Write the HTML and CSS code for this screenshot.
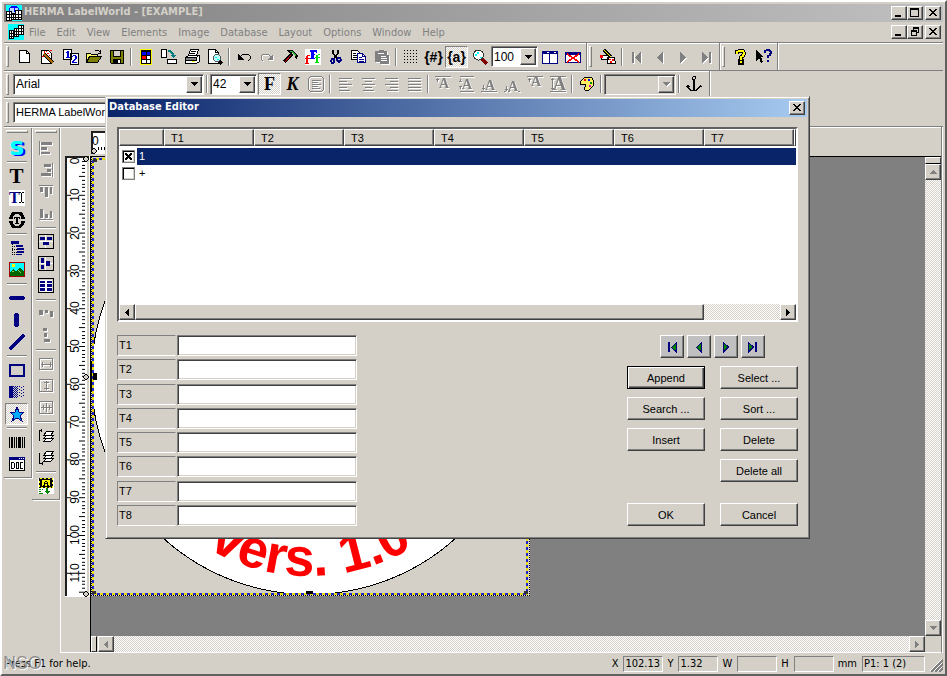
FILE: index.html
```html
<!DOCTYPE html>
<html lang="en">
<head>
    <meta charset="UTF-8">
    <meta name="viewport" content="width=device-width, initial-scale=1.0">
    <title>HERMA LabelWorld - [EXAMPLE]</title>
    <link rel="stylesheet" href="styles.css">
</head>
<body>
<div class="window">
    <header class="titlebar">
        <svg class="ico" viewBox="0 0 16 16"><path fill="#0ff" d="M0 0h16v16H0z"/><circle cx="8" cy="6" r="5" fill="#c0d8ff" stroke="#00f"/><path d="M4 2h8M8 1v6" stroke="#00f"/><path fill="#fff" stroke="#000" d="M.5 6.500h5v9h-5zM9.500 5.500h6v9h-6zM5.500 8.500h4v6h-4z"/><path stroke="#000" d="M0 9.500h16M0 12.500h16M3.500 6v9M7.500 8v6M12.500 5v9"/></svg>
        <h1>HERMA LabelWorld - [EXAMPLE]</h1>
        <div class="winbtns">
            <button aria-label="Minimize"><svg viewBox="0 0 12 10"><path fill="#000" d="M2 7h6v2H2z"/></svg></button>
            <button aria-label="Maximize"><svg viewBox="0 0 12 10"><path fill="none" stroke="#000" d="M1.500 1v7.500h8V1"/><path fill="#000" d="M1 0h9v2H1z"/></svg></button>
            <button aria-label="Close" class="close"><svg viewBox="0 0 12 10"><path fill="#000" d="M2 1h2v1h1v1h2V2h1V1h2v1H9v1H8v1H7v1h1v1h1v1h1v1H8V7H7V6H5v1H4v1H2V7h1V6h1V5h1V4H4V3H3V2H2z"/></svg></button>
        </div>
    </header>

    <nav class="menubar">
        <svg class="ico" viewBox="0 0 16 16"><path fill="#0ff" d="M0 0h16v16H0z"/><path fill="#fff" d="M1 6h5v8H1zM6 4h5v8H6zM11 1h4v9h-4z"/><path fill="none" stroke="#000" d="M1.500 6.500h4v8h-4zM6.500 4.500h4v8h-4zM10.500 1.500h5v9h-5zM1 9.500h4M1 12.500h4M6 7.500h9M6 10.500h5M11 4.500h5M3.500 6v8M8.500 4v8M13.500 1v9"/></svg>
        <button>File</button>
        <button>Edit</button>
        <button>View</button>
        <button>Elements</button>
        <button>Image</button>
        <button>Database</button>
        <button>Layout</button>
        <button>Options</button>
        <button>Window</button>
        <button>Help</button>
        <div class="winbtns">
            <button aria-label="Minimize document"><svg viewBox="0 0 12 10"><path fill="#000" d="M2 7h6v2H2z"/></svg></button>
            <button aria-label="Restore document"><svg viewBox="0 0 12 10"><path fill="none" stroke="#000" d="M4.500 3V.5h5v5H8M2.500 4.500h5v4h-5z"/><path fill="#000" d="M4 0h6v2H4zM2 3h6v2H2z"/></svg></button>
            <button aria-label="Close document" class="close"><svg viewBox="0 0 12 10"><path fill="#000" d="M2 1h2v1h1v1h2V2h1V1h2v1H9v1H8v1H7v1h1v1h1v1h1v1H8V7H7V6H5v1H4v1H2V7h1V6h1V5h1V4H4V3H3V2H2z"/></svg></button>
        </div>
    </nav>

    <!-- main toolbar -->
    <div class="bar bar-main">
        <div class="band">
            <i class="grip"></i>
            <button class="tool" aria-label="New"><svg class="ico" viewBox="0 0 16 16"><path fill="#fff" stroke="#000" d="M2.500 1.500h7l3 3v9h-10z"/><path fill="none" stroke="#000" d="M9.500 1v3.500h3"/></svg></button>
            <button class="tool" aria-label="Wizard"><svg class="ico" viewBox="0 0 16 16"><path fill="#fff" stroke="#000" d="M1.500 1.500h7l3 3v10h-10z"/><path stroke="#000" stroke-width="3" d="M4 5l9 9"/><path stroke="#a60" stroke-width="1.500" d="M4 5l9 9"/><path fill="red" d="M4 2h1v2H4zM7 4h2v1H7zM10 1h2v1h-2zM2 7h2v1H2zM9 6h1v1H9zM6 2h1v1H6z"/></svg></button>
            <button class="tool" aria-label="Number"><svg class="ico" viewBox="0 0 16 16"><path fill="#fff" stroke="#000" d="M.5.5h8v10h-8zM7.500 4.500h8v11h-8z"/><path fill="#00c" d="M4 2h2v6h1v1H3V8h1V4H3V3h1zM10 6h3v1h1v3h-1v1h-1v1h-1v1h3v1H9v-2h1v-1h1v-1h1V7h-2v1H9V7h1z"/></svg></button>
            <button class="tool" aria-label="Open"><svg class="ico" viewBox="0 0 16 16"><path fill="#ff6" stroke="#000" d="M.5 13.500v-9h4l1 1h6v3"/><path fill="#808000" stroke="#000" d="M.5 13.500l3-6h12l-4 6z"/><path fill="none" stroke="#000" d="M8.500 2.500l1-1h3l2 2M14.500 1v3h-3"/></svg></button>
            <button class="tool" aria-label="Save"><svg class="ico" viewBox="0 0 16 16"><path fill="#808000" stroke="#000" d="M1.500 1.500h13v13h-12l-1-1z"/><path fill="#d4d0c8" stroke="#000" d="M4.500 1.500h7v6h-7z"/><path fill="#000" d="M4 10h8v4H4z"/><path fill="#fff" d="M9 11h2v3H9z"/></svg></button>
            <i class="sep"></i>
            <button class="tool" aria-label="Label colours"><svg class="ico" viewBox="0 0 16 16"><path fill="#ff0" d="M2 0h12v16H2z"/><path d="M3 1h10v14H3z"/><path fill="#00f" d="M4 3h4v3H4zM9 3h3v3H9z"/><path fill="red" d="M4 7h4v3H4z"/><path fill="#fff" d="M9 7h3v3H9zM4 11h4v3H4zM9 11h3v3H9z"/></svg></button>
            <button class="tool" aria-label="Rotate"><svg class="ico" viewBox="0 0 16 16"><path fill="#fff" stroke="#000" d="M.5.5h5v8h-5zM6.500 10.500h9v4h-9z"/><path fill="none" stroke="#008080" stroke-width="2" d="M7 2h2l3 3v3"/><path fill="#008080" d="M9 6h6l-3 3z"/></svg></button>
            <button class="tool" aria-label="Print"><svg class="ico" viewBox="0 0 16 16"><path fill="#fff" stroke="#000" d="M4.500 6.500l2-6h8l-2 6zM1.500 8.500l3-2h11v6l-3 2h-11z"/><path fill="#808080" d="M2 9h10v2H2z"/><path fill="none" stroke="#000" d="M1 11.500h11.500v-3M7 2.500h5M6 4.500h5M1 8.500h11l3-2"/><path fill="#ff0" d="M8 12h3v1H8z"/></svg></button>
            <button class="tool" aria-label="Preview"><svg class="ico" viewBox="0 0 16 16"><path fill="#fff" stroke="#000" d="M1.500.5h7l3 3v11h-10z"/><path fill="none" stroke="#000" d="M8.500.5v3h3"/><path stroke="#000" stroke-width="3" d="M12 12l3 3"/><circle cx="10" cy="9" r="3.500" fill="#bff" stroke="#555"/><path fill="#0ff" d="M8 8h2v1H8zM10 10h2v1h-2z"/></svg></button>
            <i class="sep"></i>
            <button class="tool" aria-label="Undo"><svg class="ico" viewBox="0 0 16 16"><path fill="none" stroke="#000" d="M3 9l3-3 3-1h3l2 2v3l-2 2"/><path d="M2 5v6h6z"/></svg></button>
            <button class="tool off" aria-label="Redo"><svg class="ico" viewBox="0 0 16 16"><path fill="none" stroke="#808080" d="M13 9l-3-3-3-1H4L2 7v3l2 2"/><path fill="#808080" d="M14 5v6H8z"/></svg></button>
            <button class="tool" aria-label="Tools"><svg class="ico" viewBox="0 0 16 16"><path stroke="#000" stroke-width="3" d="M10 5l-8 8"/><path stroke="#b00" stroke-width="1" d="M9 6l-6 7"/><path fill="#000" d="M5 1h6l5 6-1 3-2-1V7l-3-3H7z"/><path stroke="#3a3" d="M8 2.500h2l4 4"/></svg></button>
            <button class="tool" aria-label="Fonts"><svg class="ico" viewBox="0 0 16 16"><path fill="#fff" d="M0 0h16v16H0z"/><path fill="red" d="M3 6h2v1H3v2h2v1H3v4h1v1H0v-1h1v-4H0V9h1V7h1V6z"/><path fill="#00f" d="M5 1h7v3h-1V3H9v2h1v1H9v3h1v1H5V9h1V3H5z"/><path fill="#0d0" d="M13 5h2v1h-2v2h2v1h-2v4h1v1h-4v-1h1V9h-1V8h1V6h2z"/></svg></button>
            <button class="tool" aria-label="Cut"><svg class="ico" viewBox="0 0 16 16"><path fill="none" stroke="#000" stroke-width="1.500" d="M5 1v3l4 6M10 1v3L6 10"/><path fill="none" stroke="#000080" stroke-width="1.500" d="M4 10h2v3l-1 1H4l-1-2zM10 9h2l1 2-2 2-2-2z"/></svg></button>
            <button class="tool" aria-label="Copy"><svg class="ico" viewBox="0 0 16 16"><path fill="#fff" stroke="#000" d="M.5 1.500h6l2 2v7h-8z"/><path fill="#fff" stroke="#000080" d="M6.500 4.500h5l3 3v6h-8z"/><path fill="none" stroke="#000080" d="M11.500 5v2.500h3M8 8.500h3M8 10.500h5M8 12h5"/><path stroke="#000" d="M2 4.500h3M2 6.500h4M2 8.500h4"/></svg></button>
            <button class="tool off" aria-label="Paste"><svg class="ico" viewBox="0 0 16 16"><path fill="#808080" d="M1 2h3l1-1h4l1 1h3v4h2v9H6v-2H1z"/><path fill="#fff" d="M4 4h6v1H4zM7 7h5v1H7zM7 9h6v1H7zM7 11h6v1H7z"/></svg></button>
            <i class="sep"></i>
            <button class="tool" aria-label="Grid"><svg class="ico" viewBox="0 0 16 16"><path stroke="#000" stroke-dasharray="1 2" d="M1 1.500h14M1 4.500h14M1 7.500h14M1 10.500h14M1 13.500h14"/></svg></button>
            <button class="tool glyph" aria-label="Number field">{#}</button>
            <button class="tool glyph pressed" aria-label="Text field">{a}</button>
            <button class="tool" aria-label="Zoom"><svg class="ico" viewBox="0 0 16 16"><path stroke="#800000" stroke-width="3" d="M10 10l5 5"/><circle cx="6.500" cy="6" r="5" fill="#fff" stroke="#333"/><path fill="#0ff" d="M3 5h2V3h2v2H5v2H3zM8 8h2v1H8z"/></svg></button>
            <span class="combo zoom-combo"><select aria-label="Zoom level"><option>100</option></select><i class="drop"><svg viewBox="0 0 7 4"><path d="M0 0h7v1H6v1H5v1H4v1H3V3H2V2H1V1H0z"/></svg></i></span>
            <button class="tool" aria-label="Tile"><svg class="ico" viewBox="0 0 16 16"><path fill="#fff" stroke="#000080" d="M.5 2.500h7v12h-7zM7.500 2.500h8v12h-8z"/><path fill="#000080" d="M0 2h16v3H0z"/><path stroke="#fff" d="M5 3.500h2M12 3.500h2"/></svg></button>
            <button class="tool" aria-label="Close window"><svg class="ico" viewBox="0 0 16 16"><path fill="#fff" stroke="#000080" d="M.5 3.500h15v10H.5z"/><path fill="#000080" d="M0 3h16v3H0z"/><path stroke="red" stroke-width="1.500" d="M2 5l12 8M14 5L2 13"/></svg></button>
        </div>
        <div class="band band-db">
            <i class="grip"></i>
            <button class="tool" aria-label="Edit database"><svg class="ico" viewBox="0 0 16 16"><path fill="#fff" stroke="#000" d="M1.500 6.500h7v4h-7zM7.500 8.500h7l1 6h-8z"/><path stroke="#000" stroke-width="3" d="M4 1l7 7"/><path stroke="#ff0" d="M4 1l7 7"/><path fill="red" d="M0 6h3v3H0zM9 10h2v1H9zM12 10h2v2h-2zM10 12h2v2h-2z"/></svg></button>
            <i class="sep"></i>
            <button class="tool off" aria-label="First"><svg class="ico" viewBox="0 0 16 16"><path fill="#808080" d="M3 3h2v11H3zM12 3v11L6 9V8z"/></svg></button>
            <button class="tool off" aria-label="Previous"><svg class="ico" viewBox="0 0 16 16"><path fill="#808080" d="M11 3v11L5 9V8z"/></svg></button>
            <button class="tool off" aria-label="Next"><svg class="ico" viewBox="0 0 16 16"><path fill="#808080" d="M5 3v11l6-5V8z"/></svg></button>
            <button class="tool off" aria-label="Last"><svg class="ico" viewBox="0 0 16 16"><path fill="#808080" d="M11 3h2v11h-2zM4 3v11l6-5V8z"/></svg></button>
        </div>
        <div class="band">
            <i class="grip"></i>
            <button class="tool" aria-label="Help"><svg class="ico" viewBox="0 0 16 16"><path fill="none" stroke="#000" stroke-width="4" d="M4 5V3l2-1h4l1 2-1 3-2 1v3M7 12h2v2H7z"/><path fill="none" stroke="#ff0" stroke-width="2" d="M4 5V3l2-1h4l1 2-1 3-2 1v3M8 12v2"/></svg></button>
            <button class="tool" aria-label="Context help"><svg class="ico" viewBox="0 0 16 16"><path d="M0 1l7 7H5l2 5-2 1-2-5-3 3z"/><path fill="none" stroke="#000080" stroke-width="2" d="M9 4V2l2-1h2l2 2-1 3-2 1v2M12 11v2"/></svg></button>
        </div>
    </div>

    <!-- text toolbar -->
    <div class="bar bar-text">
        <div class="band">
            <i class="grip"></i>
            <span class="combo font-combo"><select aria-label="Font"><option>Arial</option></select><i class="drop"><svg viewBox="0 0 7 4"><path d="M0 0h7v1H6v1H5v1H4v1H3V3H2V2H1V1H0z"/></svg></i></span>
            <i class="sep"></i>
            <span class="combo size-combo"><select aria-label="Font size"><option>42</option></select><i class="drop"><svg viewBox="0 0 7 4"><path d="M0 0h7v1H6v1H5v1H4v1H3V3H2V2H1V1H0z"/></svg></i></span>
            <button class="tool serif pressed" aria-label="Bold">F</button>
            <button class="tool serif italic" aria-label="Italic">K</button>
            <button class="tool off" aria-label="Paragraph"><svg class="ico" viewBox="0 0 16 16"><path fill="none" stroke="#808080" d="M2.500.5h11l2 2v11l-2 2h-11l-2-2v-11zM4 4.500h9M4 6.500h6M4 8.500h9M4 10.500h6M4 12.500h8"/></svg></button>
            <i class="sep"></i>
            <button class="tool off" aria-label="Align left"><svg class="ico" viewBox="0 0 16 16"><path stroke="#808080" d="M2 2.500h13M2 5.500h8M2 8.500h13M2 11.500h8M2 14.500h11"/></svg></button>
            <button class="tool off" aria-label="Center"><svg class="ico" viewBox="0 0 16 16"><path stroke="#808080" d="M2 2.500h13M5 5.500h7M2 8.500h13M5 11.500h7M3 14.500h11"/></svg></button>
            <button class="tool off" aria-label="Align right"><svg class="ico" viewBox="0 0 16 16"><path stroke="#808080" d="M2 2.500h13M7 5.500h8M2 8.500h13M7 11.500h8M4 14.500h11"/></svg></button>
            <button class="tool off" aria-label="Justify"><svg class="ico" viewBox="0 0 16 16"><path stroke="#808080" d="M2 2.500h13M2 5.500h13M2 8.500h13M2 11.500h13M2 14.500h13"/></svg></button>
            <i class="sep"></i>
            <button class="tool off" aria-label="Top"><svg class="ico" viewBox="0 0 16 16"><path fill="none" stroke="#808080" d="M0 .5h16M2.500 2v4M1 3.500h3"/><text class="letter" x="4" y="12">A</text></svg></button>
            <button class="tool off" aria-label="Middle"><svg class="ico" viewBox="0 0 16 16"><path fill="none" stroke="#808080" d="M2 .5h14M2 15.500h14M2.500 3v3M2.500 10v3M1 5.500h3M1 10.500h3"/><text class="letter" x="4" y="13">A</text></svg></button>
            <button class="tool off" aria-label="Bottom"><svg class="ico" viewBox="0 0 16 16"><path fill="none" stroke="#808080" d="M0 15.500h16M2.500 9v5M1 12.500h3"/><text class="letter" x="4" y="14">A</text></svg></button>
            <button class="tool off" aria-label="Baseline"><svg class="ico" viewBox="0 0 16 16"><path fill="none" stroke="#808080" d="M0 15.500h2M4 15.500h2M14 15.500h2M2.500 10v5M1 13.500h3"/><text class="letter" x="4" y="15">A</text></svg></button>
            <button class="tool off" aria-label="Capline"><svg class="ico" viewBox="0 0 16 16"><path fill="none" stroke="#808080" d="M0 .5h16M2.500 2v4M1 3.500h3"/><text class="letter" x="4" y="10">A</text></svg></button>
            <button class="tool off" aria-label="Stretch"><svg class="ico" viewBox="0 0 16 16"><path fill="none" stroke="#808080" d="M0 .5h16M0 15.500h16M2.500 2v12M1 3.500h3M1 12.500h3"/><text class="letter tall" x="3" y="14">A</text></svg></button>
            <i class="sep"></i>
            <button class="tool" aria-label="Colour"><svg class="ico" viewBox="0 0 16 16"><path fill="#ffef60" stroke="#000" d="M5 2l4-1 4 1 2 4-1 4-4 4H6l-1-2 2-2-1-2-4 1-1-3z"/><path fill="red" d="M5 3h2v2H5z"/><path fill="#00f" d="M9 3h2v2H9z"/><path fill="#080" d="M11 6h2v2h-2z"/><path fill="#c0c" d="M10 9h2v2h-2z"/></svg></button>
            <i class="sep"></i>
            <span class="combo line-combo"><select aria-label="Line width" disabled><option></option></select><i class="drop off"><svg viewBox="0 0 7 4"><path fill="#808080" d="M0 0h7v1H6v1H5v1H4v1H3V3H2V2H1V1H0z"/></svg></i></span>
            <i class="sep"></i>
            <button class="tool" aria-label="Anchor"><svg class="ico" viewBox="0 0 16 16"><circle cx="8" cy="2" r="1.500" fill="none" stroke="#000"/><path fill="none" stroke="#000" d="M7.500 3v11M1.500 10v1l3 3h6l3-3v-1M8.500 3v11"/><path d="M0 11l1-2h1l2 2zM12 11l2-2h1l1 2z"/></svg></button>
        </div>
    </div>

    <!-- document selector -->
    <div class="bar bar-doc">
        <div class="band">
            <i class="grip"></i>
            <span class="combo doc-combo"><select aria-label="Document"><option>HERMA LabelWorld</option></select><i class="drop"><svg viewBox="0 0 7 4"><path d="M0 0h7v1H6v1H5v1H4v1H3V3H2V2H1V1H0z"/></svg></i></span>
        </div>
    </div>

    <main class="workspace">
        <div class="tools">
            <div class="column column-draw">
                <i class="grip-h"></i>
                <button class="tool select-tool" aria-label="Select">S</button>
                <i class="sep-h"></i>
                <button class="tool serif big" aria-label="Text">T</button>
                <button class="tool" aria-label="Text box"><svg class="ico" viewBox="0 0 16 16"><path fill="#fff" d="M0 0h16v16H0z"/><text class="letter box" x="0" y="13">T</text><path fill="none" stroke="#000" d="M10 2.500h2M13 2.500h2M12.500 3v9M10 12.500h2M13 12.500h2"/></svg></button>
                <button class="tool" aria-label="Circular text"><svg class="ico" viewBox="0 0 16 16"><path fill="none" stroke="#000" stroke-width="3" d="M2 6.500a6 6 0 0 1 12 0M2 9.500a6 6 0 0 0 12 0"/><path fill="#000" d="M0 5h4v2H0zM12 5h4v2h-4zM0 9h4v2H0zM12 9h4v2h-4z"/><path d="M5 5h6v2h-1V6H9v5h1v1H6v-1h1V6H6v1H5z"/></svg></button>
                <i class="sep-h"></i>
                <button class="tool" aria-label="Tree"><svg class="ico" viewBox="0 0 16 16"><path fill="#000080" d="M2 1h8v3H2zM7 5h7v2H7zM8 8h7v2H8zM8 11h7v2H8zM7 14h6v1H7z"/><path stroke="#000" stroke-dasharray="1 1" d="M3.500 4v11M3 6.500h4M3 9.500h5M3 12.500h5M3 14.500h4"/></svg></button>
                <button class="tool" aria-label="Picture"><svg class="ico" viewBox="0 0 16 16"><path fill="#0ff" stroke="#a00000" d="M.5.5h15v14H.5z"/><path fill="#ff0" d="M3 2h3v3H3z"/><path fill="#060" d="M1 14v-4l3-3 3 2 4-4 4 5v4z"/><path stroke="#9c4" d="M3 10l2-1M9 8l3 3"/></svg></button>
                <i class="sep-h"></i>
                <button class="tool" aria-label="Horizontal line"><svg class="ico" viewBox="0 0 16 16"><path fill="#000080" d="M1 6h14v1h1v2h-1v1H1V9H0V7h1z"/></svg></button>
                <button class="tool" aria-label="Vertical line"><svg class="ico" viewBox="0 0 16 16"><path fill="#000080" d="M6 1h3v1h1v12H9v1H6v-1H5V2h1z"/></svg></button>
                <button class="tool" aria-label="Diagonal line"><svg class="ico" viewBox="0 0 16 16"><path stroke="#000080" stroke-width="4" stroke-linecap="round" d="M2 14L14 2"/></svg></button>
                <i class="sep-h"></i>
                <button class="tool" aria-label="Rectangle"><svg class="ico" viewBox="0 0 16 16"><path fill="none" stroke="#000080" stroke-width="2" d="M1 3h14v11H1z"/></svg></button>
                <button class="tool" aria-label="Gradient"><svg class="ico" viewBox="0 0 16 16"><path fill="#000080" d="M0 2h4v12H0z"/><path stroke="#000080" stroke-dasharray="1 1" d="M4.500 2v12M5.500 3v11M6.500 2v12M7.500 3v11M8.500 2v12"/><path stroke="#000080" stroke-dasharray="1 2" d="M10.500 2v12M12.500 3v11M14.500 2v12"/></svg></button>
                <button class="tool pressed" aria-label="Symbol"><svg class="ico" viewBox="0 0 16 16"><path fill="#0af" stroke="#000080" d="M8 1l2 5h5l-4 4 2 5-5-3-5 3 2-5-4-4h5z"/></svg></button>
                <i class="sep-h"></i>
                <button class="tool" aria-label="Barcode"><svg class="ico" viewBox="0 0 16 16"><path d="M0 3h1v11H0zM2 3h2v11H2zM5 3h1v11H5zM7 3h1v11H7zM9 3h3v11H9zM13 3h1v11h-1zM15 3h1v11h-1z"/></svg></button>
                <button class="tool" aria-label="OLE document"><svg class="ico" viewBox="0 0 16 16"><path fill="#fff" stroke="#000" d="M.5 1.500h15v13H.5z"/><path fill="#000080" d="M0 1h16v3H0z"/><path fill="#fff" d="M10 2h1v1h-1zM12 2h1v1h-1zM14 2h1v1h-1z"/><path fill="none" stroke="#000" d="M2.500 6.500h2l1 1v4l-1 1h-2zM7.500 6.500h2v6h-2zM14 6.500h-2.500v6H14"/></svg></button>
            </div>
            <div class="column column-arrange">
                <i class="grip-h"></i>
                <button class="tool off" aria-label="Align left edges"><svg class="ico" viewBox="0 0 16 16"><path fill="#808080" d="M1 1h1v14H1zM3 2h11v3H3zM3 7h6v3H3zM3 12h9v2H3z"/></svg></button>
                <button class="tool off" aria-label="Align right edges"><svg class="ico" viewBox="0 0 16 16"><path fill="#808080" d="M14 1h1v14h-1zM6 2h7v3H6zM9 7h4v3H9zM3 11h10v3H3z"/></svg></button>
                <button class="tool off" aria-label="Align top edges"><svg class="ico" viewBox="0 0 16 16"><path fill="#808080" d="M1 1h14v1H1zM2 3h3v5H2zM7 3h3v10H7zM12 3h2v7h-2z"/></svg></button>
                <button class="tool off" aria-label="Align bottom edges"><svg class="ico" viewBox="0 0 16 16"><path fill="#808080" d="M1 13h14v1H1zM2 3h3v9H2zM7 8h3v4H7zM12 5h2v7h-2z"/></svg></button>
                <i class="sep-h"></i>
                <button class="tool" aria-label="Center horizontally"><svg class="ico" viewBox="0 0 16 16"><path fill="#fff" d="M7 1h1v14H7zM1 7h14v1H1z"/><path fill="none" stroke="#000" d="M.5.5h15v14H.5z"/><path fill="#000080" d="M2 3h5v3H2zM9 3h5v3H9zM5 8h6v3H5z"/></svg></button>
                <button class="tool" aria-label="Center vertically"><svg class="ico" viewBox="0 0 16 16"><path fill="#fff" d="M7 1h1v14H7zM1 7h14v1H1z"/><path fill="none" stroke="#000" d="M.5.5h15v14H.5z"/><path fill="#000080" d="M3 2h3v5H3zM3 9h3v4H3zM8 5h4v5H8z"/></svg></button>
                <button class="tool" aria-label="Center on label"><svg class="ico" viewBox="0 0 16 16"><path fill="#fff" d="M2 2h12v12H2z"/><path fill="none" stroke="#000" d="M.5.5h15v14H.5z"/><path fill="#000080" d="M2 3h5v2H2zM9 3h5v2H9zM2 6h5v3H2zM9 6h5v3H9zM2 10h5v3H2zM9 10h5v3H9z"/></svg></button>
                <i class="sep-h"></i>
                <button class="tool off" aria-label="Space across"><svg class="ico" viewBox="0 0 16 16"><path fill="#808080" d="M1 4h4v5H1zM7 4h3v3H7zM12 5h3v6h-3z"/></svg></button>
                <button class="tool off" aria-label="Space down"><svg class="ico" viewBox="0 0 16 16"><path fill="#808080" d="M5 0h4v3H5zM6 5h3v4H6zM6 11h6v3H6z"/></svg></button>
                <i class="sep-h"></i>
                <button class="tool off" aria-label="Same width"><svg class="ico" viewBox="0 0 16 16"><path fill="none" stroke="#808080" d="M1.500 2.500h13v11h-13zM3 8.500h11M4.500 6v5M12.500 6v5"/></svg></button>
                <button class="tool off" aria-label="Same height"><svg class="ico" viewBox="0 0 16 16"><path fill="none" stroke="#808080" d="M1.500 1.500h13v12h-13zM8.500 3v9M6 4.500h5M6 10.500h5"/></svg></button>
                <button class="tool off" aria-label="Same size"><svg class="ico" viewBox="0 0 16 16"><path fill="none" stroke="#808080" d="M1.500 1.500h13v12h-13zM3 7.500h11M8.500 3v9M5.500 5v5M11.500 5v5"/></svg></button>
                <i class="sep-h"></i>
                <button class="tool" aria-label="Bring to front"><svg class="ico" viewBox="0 0 16 16"><path fill="none" stroke="#000" d="M4 2.500H1.500v10M3 1v3"/><path fill="#fff" stroke="#000" d="M5.500 13.500l3-3h7l-3 3zM5.500 10.500l3-3h7l-3 3zM5.500 7.500l3-4h7l-3 4z"/></svg></button>
                <button class="tool" aria-label="Send to back"><svg class="ico" viewBox="0 0 16 16"><path fill="none" stroke="#000" d="M1.500 3v10.500H5M4 12v3"/><path fill="#fff" stroke="#000" d="M5.500 11.500l3-3h7l-3 3zM5.500 8.500l3-3h7l-3 3zM5.500 5.500l3-4h7l-3 4z"/></svg></button>
                <i class="sep-h"></i>
                <button class="tool" aria-label="Insert variable"><svg class="ico" viewBox="0 0 16 16"><path fill="#fff" d="M0 0h16v16H0z"/><path d="M1 0h14v10H1z"/><path fill="none" stroke="#ff0" stroke-dasharray="2 2" d="M1.500.5h13v9h-13z"/><path fill="#ff0" d="M4 2h8v6H4z"/><path fill="none" stroke="#000" d="M5 7.500h2M9 7.500h2M6.500 7V4.500L8 3.500l1.500 1V7M7 5.500h2"/><path fill="#080" d="M8 10h2v3h2l-3 3-3-3h2zM1 11h2v1H1zM1 13h2v1H1zM1 15h4v1H1zM4 11h1v1H4z"/></svg></button>
            </div>
        </div>

        <section class="document">
            <div class="ruler-top">
                <svg width="440" height="24" viewBox="0 0 440 24"><path fill="#fff" d="M0 0h440v23H0z"/><path fill="#202020" d="M0 0h440v2H2v21H0z"/><text x="1" y="14">0</text><path stroke="#000" d="M7.500 16v3M10.500 16v3M13.500 16v3"/><path class="marker" d="M3 17l3 3-3 3-3-3z"/></svg>
            </div>
            <div class="ruler-left">
                <svg width="26" height="442" viewBox="0 0 26 442">
                    <defs>
                        <pattern id="mm" width="26" height="37.800" patternUnits="userSpaceOnUse" y="1">
                            <path stroke="#000" d="M2 .5h4M14 .5h6M17 4.300h3M17 8.100h3M17 11.800h3M17 15.600h3M14 19.400h6M17 23.200h3M17 27h3M17 30.700h3M17 34.500h3"/>
                        </pattern>
                    </defs>
                    <path fill="#fff" d="M0 0h25v441H0z"/>
                    <path fill="url(#mm)" d="M1 1h22v438H1z"/>
                    <path fill="#d4d0c8" d="M22 2h2v438h-2z"/>
                    <path fill="#202020" d="M0 0h24v2H2v438H0z"/>
                    <g class="ruler-labels">
                        <text transform="translate(14 5) rotate(-90)">0</text>
                        <text transform="translate(14 39) rotate(-90)">10</text>
                        <text transform="translate(14 77) rotate(-90)">20</text>
                        <text transform="translate(14 115) rotate(-90)">30</text>
                        <text transform="translate(14 152) rotate(-90)">40</text>
                        <text transform="translate(14 190) rotate(-90)">50</text>
                        <text transform="translate(14 228) rotate(-90)">60</text>
                        <text transform="translate(14 266) rotate(-90)">70</text>
                        <text transform="translate(14 303) rotate(-90)">80</text>
                        <text transform="translate(14 341) rotate(-90)">90</text>
                        <text transform="translate(14 379) rotate(-90)">100</text>
                        <text transform="translate(14 417) rotate(-90)">110</text>
                    </g>
                    <path class="marker" d="M21 0l3 3-3 3-3-3zM21 218l3 3-3 3-3-3zM21 435l3 3-3 3-3-3z"/>
                </svg>
            </div>
            <div class="canvas">
                <svg width="440" height="440" viewBox="0 0 440 440">
                    <path fill="#d4d0c8" d="M0 0h439v439H0z"/>
                    <circle cx="218.500" cy="219.500" r="218" fill="#fff" stroke="#000"/>
                    <path id="arc" fill="none" d="M19 220A199 199 0 0 0 417 220"/>
                    <text class="label-text"><textPath href="#arc" startOffset="206">vers. 1.0</textPath></text>
                    <g fill="none" shape-rendering="crispEdges">
                        <path stroke="#e8e000" stroke-width="2" d="M2 2h434v435H2z"/>
                        <path stroke="#22c" stroke-width="2" stroke-dasharray="3 3" d="M2 2h434v435H2z"/>
                        <path stroke="#000" stroke-dasharray="1 1" d="M.5 0v439M438.500 0v439M0 438.500h439"/>
                    </g>
                    <path fill="#000" d="M2 216h4v7H2zM215 434h7v3h-7z"/>
                    <path fill="#333" d="M1 434h4v3H1zM433 434h4v3h-4zM2 2h4v3H2z"/>
                </svg>
            </div>
            <div class="scroll-v">
                <i class="split-v"></i>
                <button class="arrow" aria-label="Scroll up"><svg viewBox="0 0 7 4"><path fill="#808080" d="M3 0h1v1h1v1h1v1h1v1H0V3h1V2h1V1h1z"/></svg></button>
                <span class="track"></span>
                <button class="arrow" aria-label="Scroll down"><svg viewBox="0 0 7 4"><path fill="#808080" d="M0 0h7v1H6v1H5v1H4v1H3V3H2V2H1V1H0z"/></svg></button>
            </div>
            <div class="scroll-h">
                <i class="split-h"></i>
                <button class="arrow" aria-label="Scroll left"><svg class="side" viewBox="0 0 4 7"><path fill="#808080" d="M4 0v7H3V6H2V5H1V4H0V3h1V2h1V1h1V0z"/></svg></button>
                <span class="track"></span>
                <button class="arrow" aria-label="Scroll right"><svg class="side" viewBox="0 0 4 7"><path fill="#808080" d="M0 0h1v1h1v1h1v1h1v1H3v1H2v1H1v1H0z"/></svg></button>
            </div>
        </section>
    </main>

    <footer class="statusbar">
        <span class="hint">Press F1 for help.</span>
        <span class="unit">X</span><output>102.13</output>
        <span class="unit">Y</span><output>1.32</output>
        <span class="unit">W</span><output></output>
        <span class="unit">H</span><output></output>
        <span class="unit">mm</span><output class="page">P1: 1 (2)</output>
        <svg class="sizer" viewBox="0 0 14 14"><path stroke="#fff" d="M1 13L13 1M5 13l8-8M9 13l4-4"/><path stroke="#808080" stroke-width="1.500" d="M2 14L14 2M6 14l8-8M10 14l4-4"/></svg>
    </footer>
    <span class="watermark">NSO</span>
</div>

<div class="dialog" role="dialog" aria-labelledby="dialogTitle">
    <header class="dialog-title">
        <h2 id="dialogTitle">Database Editor</h2>
        <div class="winbtns">
            <button aria-label="Close dialog"><svg viewBox="0 0 12 10"><path fill="#000" d="M2 1h2v1h1v1h2V2h1V1h2v1H9v1H8v1H7v1h1v1h1v1h1v1H8V7H7V6H5v1H4v1H2V7h1V6h1V5h1V4H4V3H3V2H2z"/></svg></button>
        </div>
    </header>
    <div class="dialog-body">
        <div class="records">
            <table>
                <colgroup><col class="col-no"><col span="7" class="col-field"><col></colgroup>
                <thead>
                    <tr><th></th><th>T1</th><th>T2</th><th>T3</th><th>T4</th><th>T5</th><th>T6</th><th>T7</th><th></th></tr>
                </thead>
                <tbody>
                    <tr class="selected"><td colspan="9"><div class="record"><input type="checkbox" id="rec1" checked><label for="rec1">1</label></div></td></tr>
                    <tr><td colspan="9"><div class="record"><input type="checkbox" id="recNew"><label for="recNew">+</label></div></td></tr>
                </tbody>
            </table>
            <div class="records-scroll">
                <button class="arrow" aria-label="Scroll records left"><svg class="side" viewBox="0 0 4 7"><path d="M4 0v7H3V6H2V5H1V4H0V3h1V2h1V1h1V0z"/></svg></button>
                <span class="thumb"></span>
                <span class="track"></span>
                <button class="arrow" aria-label="Scroll records right"><svg class="side" viewBox="0 0 4 7"><path d="M0 0h1v1h1v1h1v1h1v1H3v1H2v1H1v1H0z"/></svg></button>
            </div>
        </div>
        <div class="dialog-lower">
            <div class="fields">
                <div class="field"><label for="t1">T1</label><input type="text" id="t1"></div>
                <div class="field"><label for="t2">T2</label><input type="text" id="t2"></div>
                <div class="field"><label for="t3">T3</label><input type="text" id="t3"></div>
                <div class="field"><label for="t4">T4</label><input type="text" id="t4"></div>
                <div class="field"><label for="t5">T5</label><input type="text" id="t5"></div>
                <div class="field"><label for="t6">T6</label><input type="text" id="t6"></div>
                <div class="field"><label for="t7">T7</label><input type="text" id="t7"></div>
                <div class="field"><label for="t8">T8</label><input type="text" id="t8"></div>
            </div>
            <div class="actions">
                <div class="navigator">
                    <button aria-label="First record"><svg class="ico" viewBox="0 0 16 16"><path fill="#000080" d="M4 3h2v10H4z"/><path fill="#008000" stroke="#000080" d="M12.500 3.500v9.500L7.500 8.500z"/></svg></button>
                    <button aria-label="Previous record"><svg class="ico" viewBox="0 0 16 16"><path fill="#008000" stroke="#000080" d="M10.500 3.500v9.500L5.500 8.500z"/></svg></button>
                    <button aria-label="Next record"><svg class="ico" viewBox="0 0 16 16"><path fill="#008000" stroke="#000080" d="M5.500 3.500v9.500l5-5z"/></svg></button>
                    <button aria-label="Last record"><svg class="ico" viewBox="0 0 16 16"><path fill="#000080" d="M10 3h2v10h-2z"/><path fill="#008000" stroke="#000080" d="M3.500 3.500v9.500l5-5z"/></svg></button>
                </div>
                <div class="buttons">
                    <button class="push default">Append</button>
                    <button class="push">Select ...</button>
                    <button class="push">Search ...</button>
                    <button class="push">Sort ...</button>
                    <button class="push">Insert</button>
                    <button class="push">Delete</button>
                    <button class="push last">Delete all</button>
                </div>
                <div class="buttons confirm">
                    <button class="push">OK</button>
                    <button class="push">Cancel</button>
                </div>
            </div>
        </div>
    </div>
</div>
</body>
</html>
```
FILE: styles.css
```css
* {
    box-sizing: border-box;
}
body {
    margin: 0;
    background: #d4d0c8;
    color: #000;
    font-family: "DejaVu Sans Condensed", "DejaVu Sans", sans-serif;
    font-size: 11px;
    cursor: default;
}
button, select, input {
    font: inherit;
    color: inherit;
    margin: 0;
    padding: 0;
    border-radius: 0;
    outline: none;
}
svg {
    display: block;
    flex: none;
    shape-rendering: crispEdges;
}
h1, h2 {
    margin: 0;
    font-size: 11px;
    line-height: 12px;
    padding-bottom: 2px;
    font-weight: bold;
    white-space: nowrap;
}
.ico {
    width: 16px;
    height: 16px;
}
.window {
    display: flex;
    flex-direction: column;
    height: 100vh;
    padding: 2px;
    border: 2px solid;
    border-color: #fff #606060 #606060 #fff;
    position: relative;
    overflow: hidden;
}

/* title and menu */
.titlebar {
    display: flex;
    align-items: center;
    height: 18px;
    flex: none;
    padding: 0 2px;
    gap: 2px;
    background: linear-gradient(to right, #808080, #c0c0c0);
    color: #d4d0c8;
}
.menubar {
    display: flex;
    align-items: center;
    height: 20px;
    flex: none;
    padding: 0 2px 0 4px;
    gap: 11px;
    color: #808080;
}
.menubar > button {
    border: none;
    background: none;
}
.menubar > .ico {
    margin-right: -6px;
}
.winbtns {
    display: flex;
    margin-left: auto;
}
.winbtns button {
    width: 16px;
    height: 14px;
}
.winbtns .close {
    margin-left: 2px;
}
.winbtns svg {
    width: 12px;
    height: 10px;
}
.winbtns button, .arrow, .drop {
    display: flex;
    align-items: center;
    justify-content: center;
    flex: none;
    background: #d4d0c8;
    border: 1px solid;
    border-color: #fff #404040 #404040 #fff;
    box-shadow: inset -1px -1px #808080;
}
.arrow, .drop {
    width: 16px;
}
.arrow {
    height: 16px;
}
.arrow svg, .drop svg {
    width: 7px;
    height: 4px;
}
.arrow svg.side {
    width: 4px;
    height: 7px;
}

/* toolbars */
.bar {
    display: flex;
    flex: none;
    width: fit-content;
    border-bottom: 1px solid #808080;
    box-shadow: inset 0 1px #fff;
}
.bar-main {
    height: 29px;
    border-top: 1px solid #808080;
    width: auto;
}
.bar-text {
    height: 27px;
}
.bar-doc {
    height: 28px;
    border-bottom: none;
}
.band {
    display: flex;
    align-items: center;
    padding: 0 4px 0 2px;
    border-right: 1px solid #808080;
    box-shadow: 1px 0 #fff;
}
.bar-main .band {
    padding-right: 2px;
}
.grip {
    width: 3px;
    height: 21px;
    margin-right: 4px;
    border: 1px solid;
    border-color: #fff #808080 #808080 #fff;
}
.sep {
    width: 2px;
    height: 18px;
    margin: 0 2px;
    border-left: 1px solid #808080;
    border-right: 1px solid #fff;
}
.tool {
    display: flex;
    align-items: center;
    justify-content: center;
    width: 23px;
    height: 22px;
    flex: none;
    border: 1px solid transparent;
    background: none;
}
.tool.pressed {
    border-color: #808080 #fff #fff #808080;
    background: repeating-conic-gradient(#fff 0 25%, #d4d0c8 0 50%) 0 0 / 2px 2px;
}
.off svg {
    filter: drop-shadow(1px 1px 0 #fff);
}
.letter {
    font: bold 14px "Liberation Serif", "Times New Roman", serif;
    fill: #808080;
}
.letter.tall {
    font-size: 18px;
}
.letter.box {
    font-size: 16px;
    fill: #000080;
}
.glyph {
    font-family: "Liberation Sans", Arial, sans-serif;
    font-size: 14px;
    font-weight: bold;
}
.serif {
    font-family: "Liberation Serif", "Times New Roman", serif;
    font-size: 18px;
    font-weight: bold;
}
.serif.italic {
    font-style: italic;
}
.serif.big {
    font-size: 21px;
}
.select-tool {
    font: bold 20px "DejaVu Sans", sans-serif;
    color: #0ff;
    text-shadow: 1px 0 #0ff, 2px 1px #00f, 3px 1px #00f;
}
.combo {
    display: flex;
    height: 21px;
    flex: none;
    background: #fff;
    border: 1px solid;
    border-color: #808080 #fff #fff #808080;
    box-shadow: inset 1px 1px #404040;
    padding: 1px;
    font-family: "Liberation Sans", Arial, sans-serif;
}
.combo select {
    flex: 1;
    min-width: 0;
    appearance: none;
    border: none;
    background: none;
    padding-left: 1px;
}
.zoom-combo, .size-combo {
    width: 47px;
    font-size: 12px;
}
.font-combo {
    width: 191px;
    font-size: 12px;
}
.size-combo {
    margin-right: 1px;
}
.line-combo {
    width: 72px;
    background: #d4d0c8;
}
.doc-combo {
    width: 240px;
}

/* work area */
.workspace {
    display: flex;
    flex: 1;
    min-height: 0;
    border-top: 1px solid #808080;
    box-shadow: inset 0 1px #fff;
}
.tools {
    display: flex;
    align-items: flex-start;
    flex: none;
    width: 56px;
    padding-top: 1px;
}
.column {
    display: flex;
    flex-direction: column;
    align-items: center;
    width: 28px;
    padding: 2px 2px 2px 0;
    border-right: 1px solid #808080;
    border-bottom: 1px solid #808080;
    box-shadow: 1px 1px #fff;
}
.column-arrange {
    padding-left: 2px;
}
.grip-h {
    width: 22px;
    height: 3px;
    margin-bottom: 4px;
    border: 1px solid;
    border-color: #fff #808080 #808080 #fff;
}
.sep-h {
    width: 20px;
    height: 2px;
    margin: 2px 0;
    border-top: 1px solid #808080;
    border-bottom: 1px solid #fff;
}
.document {
    display: grid;
    grid-template-columns: 30px 1fr 16px;
    grid-template-rows: 29px 1fr 16px;
    flex: 1;
    min-width: 0;
    margin-right: 1px;
    border: 1px solid;
    border-color: transparent #808080 #fff #fff;
    border-top: none;
    box-shadow: 1px 0 #fff;
    font-family: "Liberation Sans", Arial, sans-serif;
    font-size: 12px;
}
.ruler-top {
    grid-column: 2 / 4;
    padding-top: 4px;
    overflow: hidden;
}
.ruler-left {
    grid-row: 2 / 4;
    grid-column: 1;
    padding-left: 4px;
    border-right: 1px solid #000;
    overflow: hidden;
}
.ruler-labels {
    text-anchor: middle;
}
.marker {
    fill: #d4d0c8;
    stroke: #000;
}
.canvas {
    overflow: hidden;
    background: #808080;
    border-top: 1px solid #000;
}
.label-text {
    font: bold 54px "Liberation Sans", Arial, sans-serif;
    fill: #f00;
}
.scroll-v {
    display: flex;
    flex-direction: column;
    border-top: 1px solid #000;
}
.scroll-h {
    display: flex;
    grid-column: 2;
}
.track {
    flex: 1;
    background: repeating-conic-gradient(#fff 0 25%, #d4d0c8 0 50%) 0 0 / 2px 2px;
}
.split-v {
    height: 7px;
    border: 1px solid;
    border-color: #fff #404040 #000 #fff;
}
.split-h {
    width: 6px;
    border: 1px solid;
    border-color: #fff #000 #404040 #fff;
    margin-right: 1px;
}

/* status bar */
.statusbar {
    display: flex;
    align-items: center;
    height: 19px;
    flex: none;
    padding: 2px 0 0 1px;
}
.hint {
    margin-right: auto;
}
.unit {
    padding: 0 5px 0 4px;
}
.statusbar output {
    width: 40px;
    height: 16px;
    line-height: 14px;
    padding-left: 1px;
    border: 1px solid;
    border-color: #808080 #fff #fff #808080;
    white-space: nowrap;
}
.statusbar .page {
    width: 63px;
}
.sizer {
    width: 14px;
    height: 14px;
    margin-left: 4px;
    align-self: flex-end;
}
.watermark {
    position: absolute;
    left: 1px;
    bottom: 0;
    font: 18px "Liberation Sans", Arial, sans-serif;
    color: rgba(90, 90, 90, 0.6);
    text-shadow: 1px 1px 1px #fff;
    pointer-events: none;
}

/* database editor */
.dialog {
    position: absolute;
    left: 105px;
    top: 96px;
    width: 705px;
    background: #d4d0c8;
    border: 1px solid;
    border-color: #d4d0c8 #404040 #404040 #d4d0c8;
    box-shadow: inset 1px 1px #fff, inset -1px -1px #808080;
    padding: 2px;
    font-family: "Liberation Sans", Arial, sans-serif;
}
.dialog-title {
    display: flex;
    align-items: center;
    height: 18px;
    padding: 0 2px 0 1px;
    background: linear-gradient(to right, #0a246a, #a6caf0);
    color: #fff;
    font-family: "DejaVu Sans Condensed", "DejaVu Sans", sans-serif;
}
.dialog-body {
    padding: 10px 9px;
}
.records {
    display: flex;
    flex-direction: column;
    height: 195px;
    background: #fff;
    border: 2px solid;
    border-color: #606060 #fff #fff #606060;
}
.records table {
    width: 100%;
    table-layout: fixed;
    border-collapse: separate;
    border-spacing: 0;
    margin-bottom: auto;
}
.col-no {
    width: 45px;
}
.col-field {
    width: 90px;
}
.records th {
    height: 17px;
    padding: 0 0 0 6px;
    text-align: left;
    font-weight: normal;
    background: #d4d0c8;
    border: 1px solid;
    border-color: #fff #404040 #404040 #fff;
    box-shadow: inset -1px -1px #808080;
}
.records td {
    padding: 0;
}
.record {
    display: flex;
    align-items: center;
    height: 17px;
    padding-left: 3px;
}
.record label {
    flex: 1;
    margin-left: 2px;
    padding-left: 2px;
    line-height: 17px;
}
.records tbody::before {
    content: "";
    display: block;
    height: 2px;
}
.selected label {
    background: #0a246a;
    color: #fff;
}
.record input {
    appearance: none;
    width: 13px;
    height: 13px;
    background: #fff;
    border: 1px solid #808080;
    box-shadow: inset 1px 1px #000, inset -1px -1px #d4d0c8;
}
.record input:checked {
    background:
        linear-gradient(45deg, transparent 40%, #000 40% 60%, transparent 60%) center / 7px 7px no-repeat,
        linear-gradient(-45deg, transparent 40%, #000 40% 60%, transparent 60%) center / 7px 7px no-repeat,
        #fff;
}
.records-scroll {
    display: flex;
}
.thumb {
    flex: 0 0 84%;
    border: 1px solid;
    border-color: #fff #404040 #404040 #fff;
    box-shadow: inset -1px -1px #808080;
    background: #d4d0c8;
}
.dialog-lower {
    display: flex;
    justify-content: space-between;
    padding-top: 13px;
}
.fields {
    display: flex;
    flex-direction: column;
    justify-content: space-between;
}
.field {
    display: flex;
    gap: 1px;
}
.field label {
    width: 59px;
    height: 21px;
    line-height: 19px;
    padding-left: 1px;
    border: 1px solid;
    border-color: #808080 #d4d0c8 #fff #808080;
}
.field input {
    width: 180px;
    height: 21px;
    background: #fff;
    padding: 0 3px;
    border: 1px solid;
    border-color: #808080 #fff #fff #808080;
    box-shadow: inset 1px 1px #404040, inset -1px -1px #d4d0c8;
}
.navigator {
    display: flex;
    justify-content: flex-end;
    gap: 3px;
    padding-right: 33px;
    margin-bottom: 8px;
}
.navigator button {
    display: flex;
    align-items: center;
    justify-content: center;
    width: 24px;
    height: 23px;
    background: #c0c0c0;
    border: 1px solid;
    border-color: #fff #404040 #404040 #fff;
    box-shadow: inset -1px -1px #808080;
}
.buttons {
    display: grid;
    grid-template-columns: 78px 78px;
    gap: 8px 15px;
}
.push {
    height: 23px;
    background: #d4d0c8;
    border: 1px solid;
    border-color: #fff #404040 #404040 #fff;
    box-shadow: inset -1px -1px #808080;
}
.push.default {
    border-color: #000;
    box-shadow: inset 1px 1px #fff, inset -1px -1px #404040, inset -2px -2px #808080;
}
.push.last {
    grid-column: 2;
}
.confirm {
    margin-top: 21px;
}
```
